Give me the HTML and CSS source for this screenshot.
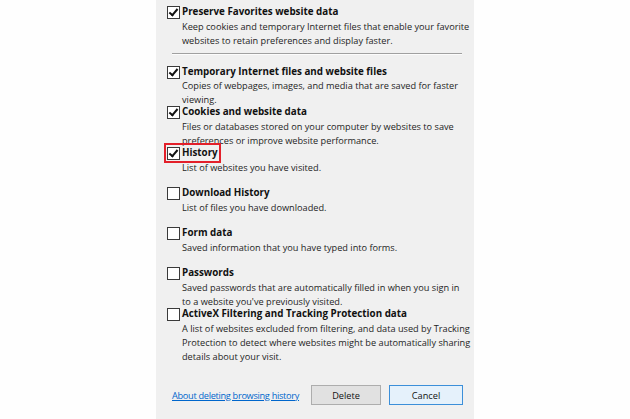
FILE: index.html
```html
<!DOCTYPE html>
<html lang="en">
  <head>
    <meta charset="UTF-8" />
    <title>Delete Browsing History</title>
    <link rel="stylesheet" href="styles.css">
  </head>
  <body>
    <div class="dialog">
      <div class="item first">
        <label class="title"><span class="box checked"></span>Preserve Favorites website data</label>
        <p class="desc">Keep cookies and temporary Internet files that enable your favorite<br>websites to retain preferences and display faster.</p>
      </div>
      <hr class="sep">
      <div class="item snug">
        <label class="title"><span class="box checked"></span>Temporary Internet files and website files</label>
        <p class="desc">Copies of webpages, images, and media that are saved for faster<br>viewing.</p>
      </div>
      <div class="item tall">
        <label class="title"><span class="box checked"></span>Cookies and website data</label>
        <p class="desc">Files or databases stored on your computer by websites to save<br>preferences or improve website performance.</p>
      </div>
      <div class="item">
        <label class="title marked"><span class="box checked"></span>History</label>
        <p class="desc">List of websites you have visited.</p>
      </div>
      <div class="item">
        <label class="title"><span class="box"></span>Download History</label>
        <p class="desc">List of files you have downloaded.</p>
      </div>
      <div class="item">
        <label class="title"><span class="box"></span>Form data</label>
        <p class="desc">Saved information that you have typed into forms.</p>
      </div>
      <div class="item tall">
        <label class="title"><span class="box"></span>Passwords</label>
        <p class="desc">Saved passwords that are automatically filled in when you sign in<br>to a website you've previously visited.</p>
      </div>
      <div class="item last">
        <label class="title"><span class="box"></span>ActiveX Filtering and Tracking Protection data</label>
        <p class="desc">A list of websites excluded from filtering, and data used by Tracking<br>Protection to detect where websites might be automatically sharing<br>details about your visit.</p>
      </div>
      <div class="footer">
        <a href="#" class="link">About deleting browsing history</a>
        <button class="btn">Delete</button>
        <button class="btn default">Cancel</button>
      </div>
    </div>
  </body>
</html>
```

FILE: styles.css
```css
body {
  margin: 0;
  background: #fefefe;
  font-family: "Open Sans", "Noto Sans", sans-serif;
  font-size: 9.2px;
  color: #1a1a1a;
}
.dialog {
  width: 318px;
  height: 419px;
  margin-left: 156px;
  background: #f0f0f0;
  padding: 5px 0 0 11px;
  box-sizing: border-box;
}
.item {
  height: 40px;
}
.item.tall {
  height: 41px;
}
.item.first {
  height: auto;
}
.item.last {
  height: 78px;
}
.title {
  display: flex;
  align-items: center;
  gap: 2px;
  line-height: 14px;
  font-size: 9.8px;
  font-weight: bold;
  color: #111;
}
.title.marked {
  width: 51px;
  outline: 2px solid #e3202a;
  outline-offset: 1px;
}
.box {
  width: 11px;
  height: 11px;
  border: 1px solid #3a3a3a;
  background: #fff;
  position: relative;
  flex: none;
}
.box.checked::after {
  content: "";
  position: absolute;
  left: 3px;
  top: 0px;
  width: 3px;
  height: 7px;
  border: solid #111;
  border-width: 0 2px 2px 0;
  transform: rotate(40deg);
}
.desc {
  margin: 1px 0 0 15px;
  line-height: 14px;
  white-space: nowrap;
  color: #1e1e1e;
}
.snug .desc {
  margin-top: 0;
}
.sep {
  margin: 5px 12px 10px 5px;
  border: none;
  border-top: 1px solid #a0a0a0;
  border-bottom: 1px solid #fcfcfc;
}
.footer {
  display: flex;
  align-items: center;
  padding: 0 11px 0 5px;
  height: 20px;
}
.link {
  color: #0066cc;
  flex: 1;
  letter-spacing: -0.3px;
}
.btn {
  font: inherit;
  color: #111;
  height: 20px;
  background: #e1e1e1;
  border: 1px solid #adadad;
  padding: 0;
  width: 70px;
}
.btn.default {
  width: 74px;
  margin-left: 8px;
  border-color: #3c8fd9;
  background: #e5f1fb;
}
```
